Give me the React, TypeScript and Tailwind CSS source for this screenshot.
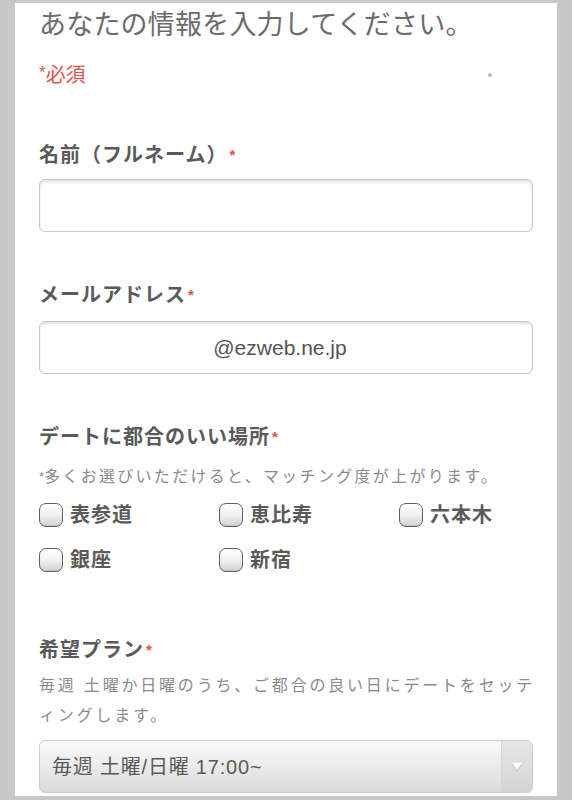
const font = { fontFamily: '"Liberation Sans", "Noto Sans CJK JP", sans-serif' }

function Req() {
  return <span className="text-[15px] align-top ml-[2px] text-[#e2514f]">*</span>
}

function Label({ children }: { children: React.ReactNode }) {
  return (
    <div className="text-[20px] leading-[28px] font-bold tracking-[1px] text-[#5a5a5a]">
      {children}
      <Req />
    </div>
  )
}

function TextBox({ value }: { value?: string }) {
  return (
    <div className="h-[53px] rounded-[6px] border border-[#c9c9c9] bg-white shadow-[inset_0_2px_3px_rgba(0,0,0,0.12)] flex items-center justify-center pr-[12px] text-[21px] text-[#555]">
      {value}
    </div>
  )
}

function Check({ label }: { label: string }) {
  return (
    <div className="flex items-center gap-[7px] h-[28px]">
      <div className="w-[24px] h-[24px] rounded-[7px] border-[1.5px] border-[#5f5f5f] bg-gradient-to-b from-white via-[#f1f1f1] to-[#d2d2d2] shadow-[inset_0_-1px_1px_rgba(0,0,0,0.08)]" />
      <span className="text-[20px] font-bold tracking-[1px] text-[#5a5a5a]">{label}</span>
    </div>
  )
}

export default function App() {
  const places = ['表参道', '恵比寿', '六本木', '銀座', '新宿']

  return (
    <div className="min-h-[800px] bg-[#c8c8c9] px-[15px] pt-[3px] pb-[4px]" style={font}>
      <div className="bg-white px-[24px] pt-[4px] pb-[3px]">
        {/* header */}
        <h1 className="text-[27px] leading-[36px] tracking-[0.2px] text-[#6b6b6b] font-normal">あなたの情報を入力してください。</h1>
        <div className="mt-[18px] flex items-center justify-between h-[28px]">
          <span className="text-[20px] text-[#e2514f]">
            <span className="text-[17px] align-top">*</span>必須
          </span>
          <span className="w-[4px] h-[4px] rounded-full bg-[#bbb] mr-[41px]" />
        </div>

        {/* name */}
        <div className="mt-[52px]">
          <Label>名前（フルネーム）</Label>
          <div className="mt-[10px]">
            <TextBox />
          </div>
        </div>

        {/* email */}
        <div className="mt-[49px]">
          <Label>メールアドレス</Label>
          <div className="mt-[12px]">
            <TextBox value="@ezweb.ne.jp" />
          </div>
        </div>

        {/* places */}
        <div className="mt-[49px]">
          <Label>デートに都合のいい場所</Label>
          <p className="mt-[12px] text-[16px] leading-[28px] tracking-[2.3px] text-[#8a8a8a]">
            <span className="text-[13px] align-top tracking-normal">*</span>多くお選びいただけると、マッチング度が上がります。
          </p>
          <div className="mt-[10px] grid grid-cols-[180px_180px_1fr] gap-y-[17px]">
            {places.map((p) => (
              <Check key={p} label={p} />
            ))}
          </div>
        </div>

        {/* plan */}
        <div className="mt-[62px]">
          <Label>希望プラン</Label>
          <p className="mt-[7px] text-[16px] leading-[30px] tracking-[2.8px] text-[#8a8a8a] whitespace-nowrap">
            毎週 土曜か日曜のうち、ご都合の良い日にデートをセッテ
            <br />
            ィングします。
          </p>
          <div className="mt-[9px] h-[53px] rounded-[6px] border border-[#cfcfcf] bg-gradient-to-b from-[#fbfbfb] to-[#dadada] flex overflow-hidden">
            <div className="flex-1 flex items-center pl-[12px] text-[20px] tracking-[0.8px] text-[#5a5a5a]">毎週 土曜/日曜 17:00~</div>
            <div className="w-[31px] border-l border-[#d6d6d6] bg-gradient-to-b from-[#e6e6e6] to-[#d4d4d4] flex items-center justify-center">
              <svg width="12" height="10" viewBox="0 0 12 10">
                <polygon points="1,2 11,2 6,9" fill="#b5b5b5" />
                <polygon points="1,1 11,1 6,8" fill="#ffffff" />
              </svg>
            </div>
          </div>
        </div>
      </div>
    </div>
  )
}
